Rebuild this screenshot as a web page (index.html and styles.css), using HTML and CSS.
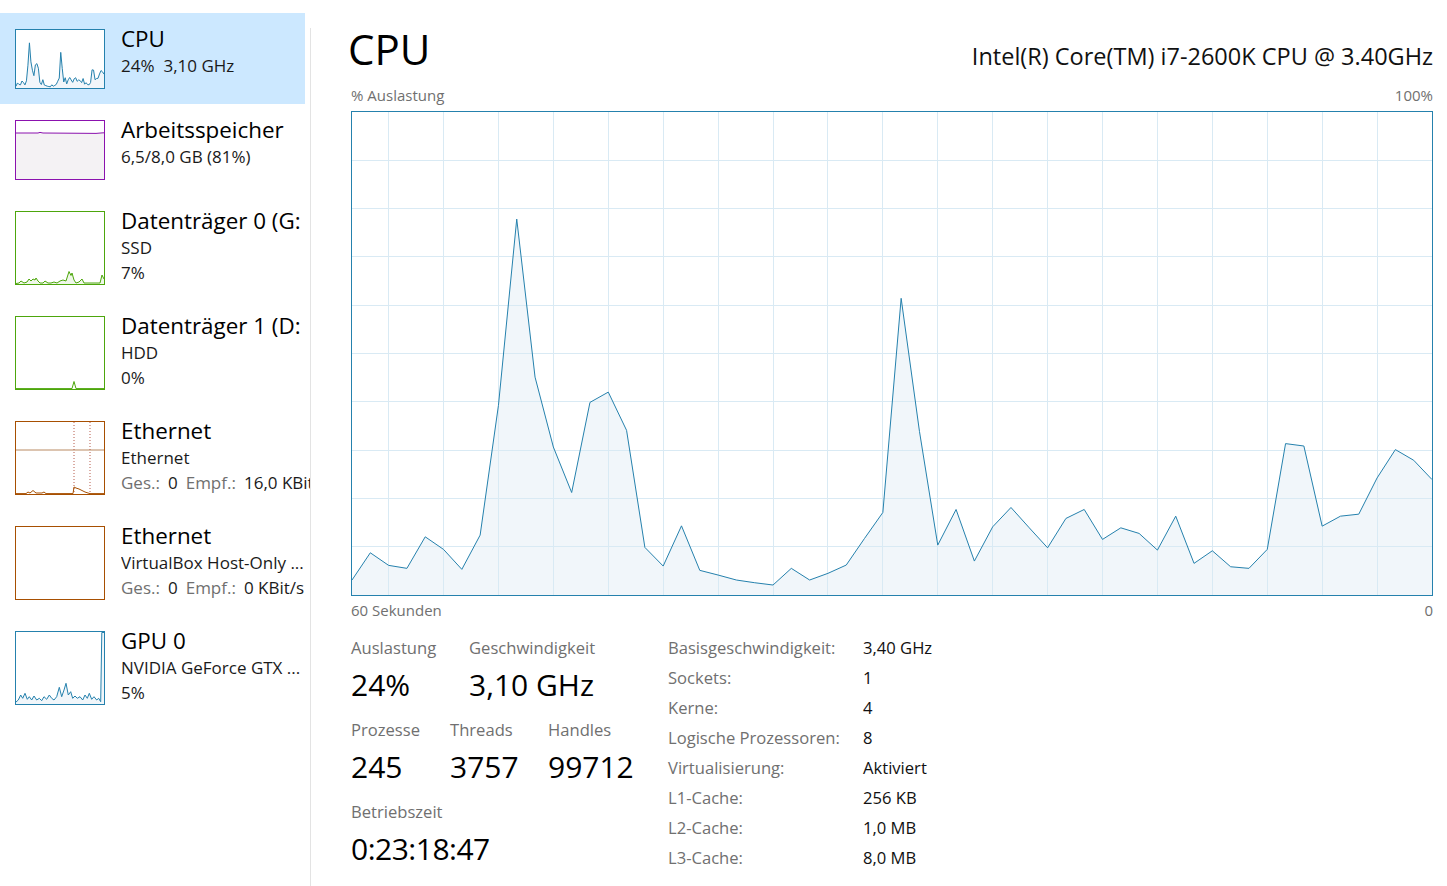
FILE: index.html
```html
<!DOCTYPE html>
<html lang="de">
<head>
<meta charset="utf-8">
<title>Task-Manager – Leistung</title>
<link rel="stylesheet" href="styles.css">
</head>
<body>
<div class="app">
  <aside class="sidebar">
    <div class="list">
      <div class="item selected">
        <div class="thumb cpu">
          <svg viewBox="0 0 59 484" preserveAspectRatio="none">
            <polygon class="fill" points="0,469 1,441.7 2,454.3 3,457.3 4,425.7 5,438.3 6,458.3 7,424 8,294 9,107.3 10,265.7 11,335.7 12,381.3 13,291 14,280.7 15,319 16,436.3 17,455 18,414.7 19,459.3 20,464 21,469 22,471.7 23,474 24,457.3 25,469 26,462.3 27,454 28,427.3 29,401.3 30,186.7 31,320 32,434 33,398.3 34,450 35,415.7 36,396.3 37,416.7 38,436.7 39,407.3 40,398.3 41,428.3 42,416.7 43,422.3 44,439 45,405 46,452.3 47,439.7 48,455.7 49,457.3 50,438.3 51,332.3 52,334.7 53,415 54,405 55,403 56,366.7 57,338.3 58,349 59,368.3 59,484 0,484"/>
            <polyline class="line" points="0,469 1,441.7 2,454.3 3,457.3 4,425.7 5,438.3 6,458.3 7,424 8,294 9,107.3 10,265.7 11,335.7 12,381.3 13,291 14,280.7 15,319 16,436.3 17,455 18,414.7 19,459.3 20,464 21,469 22,471.7 23,474 24,457.3 25,469 26,462.3 27,454 28,427.3 29,401.3 30,186.7 31,320 32,434 33,398.3 34,450 35,415.7 36,396.3 37,416.7 38,436.7 39,407.3 40,398.3 41,428.3 42,416.7 43,422.3 44,439 45,405 46,452.3 47,439.7 48,455.7 49,457.3 50,438.3 51,332.3 52,334.7 53,415 54,405 55,403 56,366.7 57,338.3 58,349 59,368.3"/>
          </svg>
        </div>
        <div class="info">
          <div class="title">CPU</div>
          <div class="subs"><div class="sub">24%<span class="gap-s">3,10 GHz</span></div></div>
        </div>
      </div>

      <div class="item">
        <div class="thumb mem">
          <svg viewBox="0 0 88 58" preserveAspectRatio="none">
            <polygon class="fill" points="0,12 22,12 24,11.4 27,12 68,12.3 80,12.4 86,11.9 88,11.8 88,58 0,58"/>
            <polyline class="line" points="0,12 22,12 24,11.4 27,12 68,12.3 80,12.4 86,11.9 88,11.8"/>
          </svg>
        </div>
        <div class="info">
          <div class="title">Arbeitsspeicher</div>
          <div class="subs"><div class="sub">6,5/8,0 GB (81%)</div></div>
        </div>
      </div>

      <div class="item">
        <div class="thumb tall disk">
          <svg viewBox="0 0 88 72" preserveAspectRatio="none">
            <polygon class="fill" points="0,71.5 3,71 5,69 8,71 11,70 13,67 15,69 17,67 19,68 20,66 22,69 24,71 27,71 29,69 32,71 35,71 38,70 41,71 44,69 47,68 50,69 53,59.5 55,63.5 56,61 58,68 60,71 63,70 66,67 68,71 72,71 84,71 86,63 88,67 88,72 0,72"/>
            <polyline class="line" points="0,71.5 3,71 5,69 8,71 11,70 13,67 15,69 17,67 19,68 20,66 22,69 24,71 27,71 29,69 32,71 35,71 38,70 41,71 44,69 47,68 50,69 53,59.5 55,63.5 56,61 58,68 60,71 63,70 66,67 68,71 72,71 84,71 86,63 88,67"/>
          </svg>
        </div>
        <div class="info">
          <div class="title">Datenträger 0 (G:</div>
          <div class="subs">
            <div class="sub">SSD</div>
            <div class="sub">7%</div>
          </div>
        </div>
      </div>

      <div class="item">
        <div class="thumb tall disk">
          <svg viewBox="0 0 88 72" preserveAspectRatio="none">
            <polyline class="line" points="0,71.6 56,71.6 58,64.5 60,71.6 88,71.6"/>
          </svg>
        </div>
        <div class="info">
          <div class="title">Datenträger 1 (D:</div>
          <div class="subs">
            <div class="sub">HDD</div>
            <div class="sub">0%</div>
          </div>
        </div>
      </div>

      <div class="item">
        <div class="thumb tall eth">
          <svg viewBox="0 0 88 72" preserveAspectRatio="none">
            <line class="mid" x1="0" y1="28" x2="88" y2="28"/>
            <line class="dots" x1="58" y1="0" x2="58" y2="72"/>
            <line class="dots" x1="74" y1="0" x2="74" y2="72"/>
            <polyline class="line" points="0,71.6 10,71.6 12,70 14,71 17,68.5 20,71 26,71 28,70 30,71.6 57,71.6 58,65 60,66 63,67 66,68.5 69,70 72,71 74,71.6 88,71.6"/>
          </svg>
        </div>
        <div class="info">
          <div class="title">Ethernet</div>
          <div class="subs">
            <div class="sub">Ethernet</div>
            <div class="sub"><span class="muted">Ges.:</span><span class="gap">0</span><span class="muted gap">Empf.:</span><span class="gap">16,0 KBit/s</span></div>
          </div>
        </div>
      </div>

      <div class="item">
        <div class="thumb tall eth"></div>
        <div class="info">
          <div class="title">Ethernet</div>
          <div class="subs">
            <div class="sub">VirtualBox Host-Only ...</div>
            <div class="sub"><span class="muted">Ges.:</span><span class="gap">0</span><span class="muted gap">Empf.:</span><span class="gap">0 KBit/s</span></div>
          </div>
        </div>
      </div>

      <div class="item">
        <div class="thumb tall gpu">
          <svg viewBox="0 0 88 72" preserveAspectRatio="none">
            <polygon class="fill" points="0,70 2.3,68 4.7,63 6.7,66.3 9,61.3 11.3,67.3 13.3,64.7 15.7,68 18,64 20.7,68 23.3,66.3 25.7,68.7 28,64.7 30.7,67.3 33.3,63 35.7,66.3 38,68 40.7,64.7 43.3,55.3 45.7,64.7 48,58 50,51.3 52.3,63 54.7,59.7 56.7,66.3 59,64 61.3,66.3 64,64.7 66.7,68 69,63 71.3,66.3 73.3,61.3 75.7,67.3 78,64.7 80.7,68 82.7,66.3 84.7,69.7 85.8,0.5 88,0.5 88,72 0,72"/>
            <polyline class="line" points="0,70 2.3,68 4.7,63 6.7,66.3 9,61.3 11.3,67.3 13.3,64.7 15.7,68 18,64 20.7,68 23.3,66.3 25.7,68.7 28,64.7 30.7,67.3 33.3,63 35.7,66.3 38,68 40.7,64.7 43.3,55.3 45.7,64.7 48,58 50,51.3 52.3,63 54.7,59.7 56.7,66.3 59,64 61.3,66.3 64,64.7 66.7,68 69,63 71.3,66.3 73.3,61.3 75.7,67.3 78,64.7 80.7,68 82.7,66.3 84.7,69.7 85.8,0.5 88,0.5"/>
          </svg>
        </div>
        <div class="info">
          <div class="title">GPU 0</div>
          <div class="subs">
            <div class="sub">NVIDIA GeForce GTX ...</div>
            <div class="sub">5%</div>
          </div>
        </div>
      </div>
    </div>
    <div class="sep"></div>
  </aside>

  <main class="main">
    <div class="header">
      <h1 class="heading">CPU</h1>
      <div class="cpu-name">Intel(R) Core(TM) i7-2600K CPU @ 3.40GHz</div>
    </div>
    <div class="axis top"><span>% Auslastung</span><span>100%</span></div>
    <div class="chart">
      <svg viewBox="0 0 59 484" preserveAspectRatio="none">
        <polygon class="fill" points="0,469 1,441.7 2,454.3 3,457.3 4,425.7 5,438.3 6,458.3 7,424 8,294 9,107.3 10,265.7 11,335.7 12,381.3 13,291 14,280.7 15,319 16,436.3 17,455 18,414.7 19,459.3 20,464 21,469 22,471.7 23,474 24,457.3 25,469 26,462.3 27,454 28,427.3 29,401.3 30,186.7 31,320 32,434 33,398.3 34,450 35,415.7 36,396.3 37,416.7 38,436.7 39,407.3 40,398.3 41,428.3 42,416.7 43,422.3 44,439 45,405 46,452.3 47,439.7 48,455.7 49,457.3 50,438.3 51,332.3 52,334.7 53,415 54,405 55,403 56,366.7 57,338.3 58,349 59,368.3 59,484 0,484"/>
        <g class="grid">
          <line x1="2" y1="0" x2="2" y2="484"/>
          <line x1="5" y1="0" x2="5" y2="484"/>
          <line x1="8" y1="0" x2="8" y2="484"/>
          <line x1="11" y1="0" x2="11" y2="484"/>
          <line x1="14" y1="0" x2="14" y2="484"/>
          <line x1="17" y1="0" x2="17" y2="484"/>
          <line x1="20" y1="0" x2="20" y2="484"/>
          <line x1="23" y1="0" x2="23" y2="484"/>
          <line x1="26" y1="0" x2="26" y2="484"/>
          <line x1="29" y1="0" x2="29" y2="484"/>
          <line x1="32" y1="0" x2="32" y2="484"/>
          <line x1="35" y1="0" x2="35" y2="484"/>
          <line x1="38" y1="0" x2="38" y2="484"/>
          <line x1="41" y1="0" x2="41" y2="484"/>
          <line x1="44" y1="0" x2="44" y2="484"/>
          <line x1="47" y1="0" x2="47" y2="484"/>
          <line x1="50" y1="0" x2="50" y2="484"/>
          <line x1="53" y1="0" x2="53" y2="484"/>
          <line x1="56" y1="0" x2="56" y2="484"/>
          <line x1="0" y1="48.4" x2="59" y2="48.4"/>
          <line x1="0" y1="96.8" x2="59" y2="96.8"/>
          <line x1="0" y1="145.2" x2="59" y2="145.2"/>
          <line x1="0" y1="193.6" x2="59" y2="193.6"/>
          <line x1="0" y1="242" x2="59" y2="242"/>
          <line x1="0" y1="290.4" x2="59" y2="290.4"/>
          <line x1="0" y1="338.8" x2="59" y2="338.8"/>
          <line x1="0" y1="387.2" x2="59" y2="387.2"/>
          <line x1="0" y1="435.6" x2="59" y2="435.6"/>
        </g>
        <polyline class="line" points="0,469 1,441.7 2,454.3 3,457.3 4,425.7 5,438.3 6,458.3 7,424 8,294 9,107.3 10,265.7 11,335.7 12,381.3 13,291 14,280.7 15,319 16,436.3 17,455 18,414.7 19,459.3 20,464 21,469 22,471.7 23,474 24,457.3 25,469 26,462.3 27,454 28,427.3 29,401.3 30,186.7 31,320 32,434 33,398.3 34,450 35,415.7 36,396.3 37,416.7 38,436.7 39,407.3 40,398.3 41,428.3 42,416.7 43,422.3 44,439 45,405 46,452.3 47,439.7 48,455.7 49,457.3 50,438.3 51,332.3 52,334.7 53,415 54,405 55,403 56,366.7 57,338.3 58,349 59,368.3"/>
      </svg>
    </div>
    <div class="axis bottom"><span>60 Sekunden</span><span>0</span></div>

    <div class="stats">
      <div class="stats-left">
        <div class="stat-row">
          <div class="stat w118">
            <div class="label">Auslastung</div>
            <div class="value">24%</div>
          </div>
          <div class="stat">
            <div class="label">Geschwindigkeit</div>
            <div class="value">3,10 GHz</div>
          </div>
        </div>
        <div class="stat-row">
          <div class="stat w99">
            <div class="label">Prozesse</div>
            <div class="value">245</div>
          </div>
          <div class="stat w98">
            <div class="label">Threads</div>
            <div class="value">3757</div>
          </div>
          <div class="stat">
            <div class="label">Handles</div>
            <div class="value">99712</div>
          </div>
        </div>
        <div class="stat-row">
          <div class="stat">
            <div class="label">Betriebszeit</div>
            <div class="value uptime">0:23:18:47</div>
          </div>
        </div>
      </div>
      <div class="info-table">
        <div class="k">Basisgeschwindigkeit:</div><div class="v">3,40 GHz</div>
        <div class="k">Sockets:</div><div class="v">1</div>
        <div class="k">Kerne:</div><div class="v">4</div>
        <div class="k">Logische Prozessoren:</div><div class="v">8</div>
        <div class="k">Virtualisierung:</div><div class="v">Aktiviert</div>
        <div class="k">L1-Cache:</div><div class="v">256 KB</div>
        <div class="k">L2-Cache:</div><div class="v">1,0 MB</div>
        <div class="k">L3-Cache:</div><div class="v">8,0 MB</div>
      </div>
    </div>
  </main>
</div>
</body>
</html>
```
FILE: styles.css
```css
* { box-sizing: border-box; }

html, body {
  margin: 0;
  padding: 0;
  background: #ffffff;
}

body {
  font-family: "Open Sans", "Noto Sans", "DejaVu Sans", sans-serif;
  color: #000000;
}

.app {
  display: flex;
  width: 1447px;
  height: 886px;
  overflow: hidden;
}

/* ---------- Sidebar ---------- */
.sidebar {
  display: flex;
  flex: none;
  width: 311px;
}

.list {
  width: 310px;
  padding-top: 13px;
}

.sep {
  width: 1px;
  margin-top: 28px;
  background: #e3e3e3;
}

.item {
  display: flex;
  align-items: flex-start;
  padding: 12px 0 15px 15px;
  overflow: hidden;
}

.item.selected {
  background: linear-gradient(to right, #cce8ff 305px, transparent 305px);
}

.thumb {
  flex: none;
  width: 90px;
  height: 60px;
  margin-top: 4px;
  border: 1px solid;
  background: #ffffff;
}

.thumb.tall { height: 74px; }

.thumb svg {
  display: block;
  width: 100%;
  height: 100%;
}

.thumb .line,
.chart .line {
  fill: none;
  stroke-width: 1;
  vector-effect: non-scaling-stroke;
}

.thumb.cpu { border-color: #2581ad; }
.thumb.cpu .fill { fill: #f1f6fa; }
.thumb.cpu .line { stroke: #2581ad; }

.thumb.mem { border-color: #8b12ae; }
.thumb.mem .fill { fill: #f4f2f4; }
.thumb.mem .line { stroke: #8b12ae; }

.thumb.disk { border-color: #4da60c; }
.thumb.disk .fill { fill: #eff7e9; }
.thumb.disk .line { stroke: #4da60c; }

.thumb.eth { border-color: #a74f01; }
.thumb.eth .line { stroke: #a74f01; }
.thumb.eth .mid {
  stroke: #b98a62;
  stroke-width: 1;
  vector-effect: non-scaling-stroke;
}
.thumb.eth .dots {
  stroke: #b65a4a;
  stroke-width: 1;
  stroke-dasharray: 1 2;
  vector-effect: non-scaling-stroke;
}

.thumb.gpu { border-color: #2581ad; }
.thumb.gpu .fill { fill: #f1f6fa; }
.thumb.gpu .line { stroke: #2581ad; }

.info {
  margin-left: 16px;
  min-width: 0;
}

.title {
  font-size: 22.4px;
  line-height: 28px;
  white-space: nowrap;
}

.subs { margin-top: 1px; }

.sub {
  width: 189px;
  font-size: 17px;
  line-height: 24.5px;
  white-space: nowrap;
  overflow: hidden;
  color: #1a1a1a;
}

.muted { color: #707070; }
.gap { margin-left: 8px; }
.gap-s { margin-left: 9px; }

/* ---------- Main ---------- */
.main {
  flex: 1;
  min-width: 0;
  padding: 25px 14px 0 40px;
}

.header {
  display: flex;
  justify-content: space-between;
  align-items: baseline;
  height: 48px;
  line-height: 48px;
}

.heading {
  margin: 0 0 0 -3px;
  font-size: 42px;
  font-weight: 400;
}

.cpu-name {
  font-size: 23.5px;
  color: #111111;
}

.axis {
  display: flex;
  justify-content: space-between;
  font-size: 15px;
  line-height: 20px;
  color: #707070;
}

.axis.top { margin-top: 12px; }
.axis.bottom { margin-top: 4px; }

.chart {
  margin-top: 6px;
  height: 485px;
  border: 1px solid #2581ad;
}

.chart svg {
  display: block;
  width: 100%;
  height: 100%;
}

.chart .fill { fill: #f1f6fa; }

.chart .grid line {
  stroke: #d9eaf4;
  stroke-width: 1;
  vector-effect: non-scaling-stroke;
  shape-rendering: crispEdges;
}

.chart .line { stroke: #2581ad; }

/* ---------- Stats ---------- */
.stats {
  display: flex;
  align-items: flex-start;
  margin-top: 13px;
}

.stats-left {
  flex: none;
  width: 317px;
  padding-top: 3px;
}

.stat-row {
  display: flex;
  margin-bottom: 13px;
}

.w118 { width: 118px; }
.w99 { width: 99px; }
.w98 { width: 98px; }

.stat .label {
  font-size: 16.6px;
  line-height: 24px;
  color: #707070;
}

.stat .value {
  margin-top: 5px;
  font-size: 30px;
  line-height: 40px;
  color: #000000;
}

.stat .value.uptime { letter-spacing: -0.5px; }

.info-table {
  display: grid;
  grid-template-columns: 195px auto;
  align-content: start;
  font-size: 16.6px;
  line-height: 30px;
}

.info-table .k { color: #707070; }
.info-table .v { color: #111111; }
```
